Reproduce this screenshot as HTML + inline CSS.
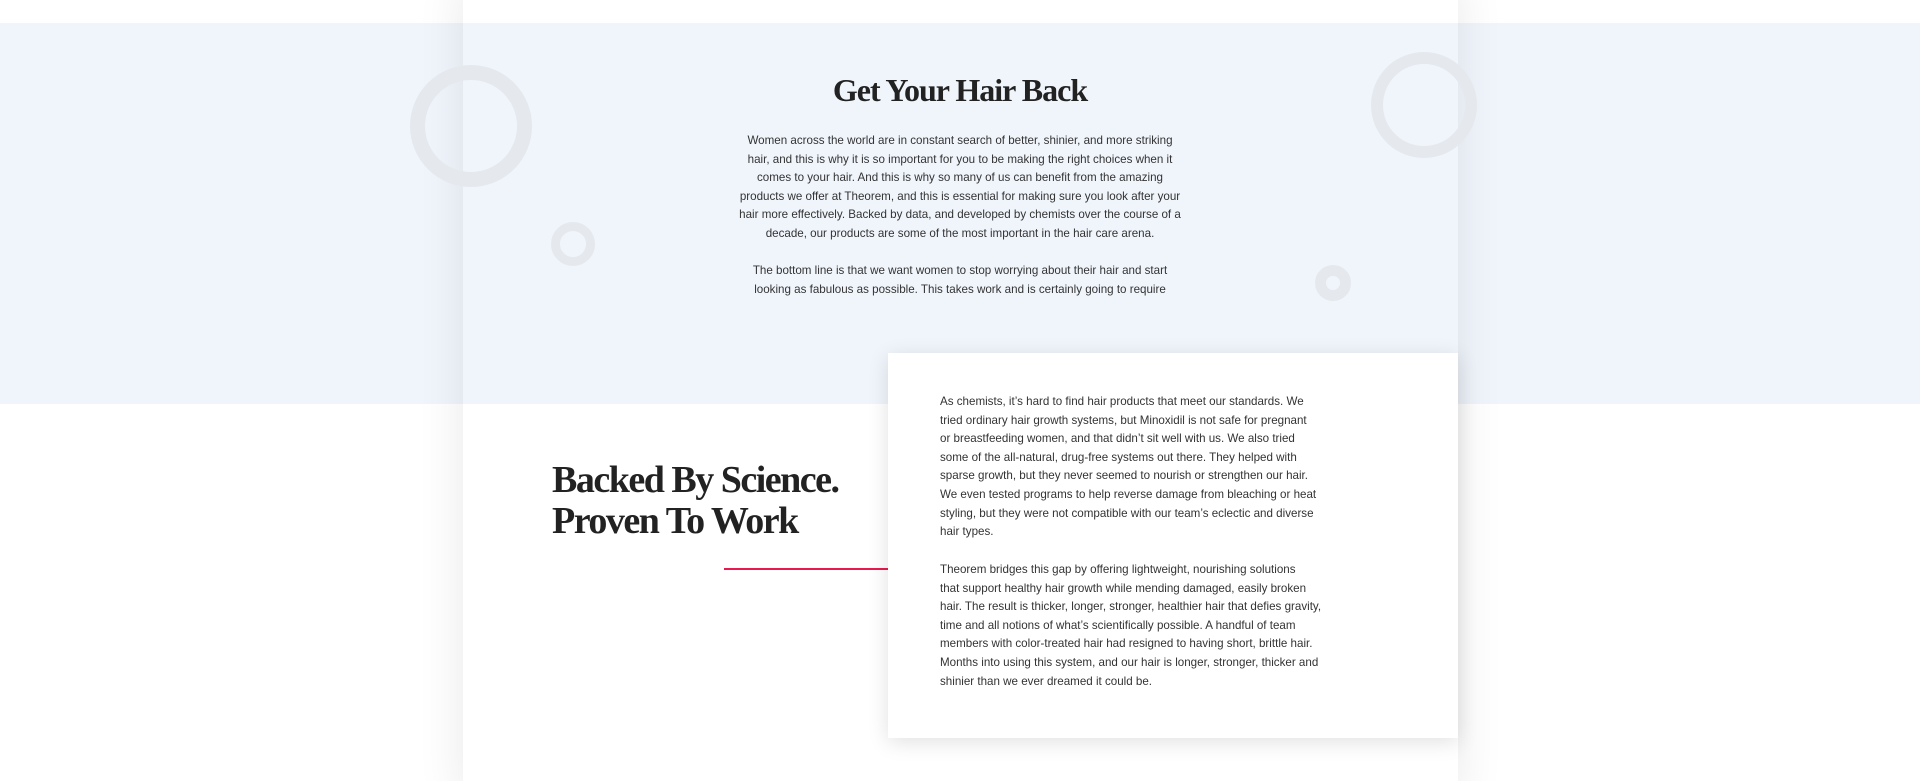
<!DOCTYPE html>
<html><head><meta charset="utf-8"><style>
html,body{margin:0;padding:0;width:1920px;height:781px;overflow:hidden;background:#fff;position:relative}
.band{position:absolute;left:0;top:23px;width:1920px;height:381px;background:#f0f5fc}
.col{position:absolute;left:463px;top:-20px;width:995px;height:820px;box-shadow:0 0 45px rgba(0,0,0,.09)}
.ring{position:absolute;border-radius:50%;border-style:solid;border-color:#e5e9ee;box-sizing:border-box}
h1,h2{font-family:"Liberation Serif",serif;font-weight:bold;color:#222;margin:0;letter-spacing:-1px}
h1{position:absolute;left:0;width:1920px;top:72px;text-align:center;font-size:32px}
p{font-family:"Liberation Sans",sans-serif;font-size:11.6px;line-height:18.6px;color:#333;margin:0;white-space:nowrap}
.intro{position:absolute;left:660px;width:600px;top:132px;text-align:center}
.card{position:absolute;left:888px;top:353px;width:570px;height:385px;background:#fff;box-shadow:0 4px 20px rgba(0,0,0,.12)}
.card p{position:absolute;left:52px}
h2{position:absolute;left:552px;top:460px;font-size:38px;line-height:41px;letter-spacing:-1.5px}
.red{position:absolute;left:724px;top:568px;width:164px;height:2px;background:#e8194f}
</style></head><body>
<div class="band"></div>
<div class="col"></div>
<div class="ring" style="left:410px;top:65px;width:122px;height:122px;border-width:15px"></div>
<div class="ring" style="left:1371px;top:52px;width:106px;height:106px;border-width:12px"></div>
<div class="ring" style="left:551px;top:222px;width:44px;height:44px;border-width:9px"></div>
<div class="ring" style="left:1315px;top:265px;width:36px;height:36px;border-width:11px"></div>
<h1>Get Your Hair Back</h1>
<div class="intro">
<p>Women across the world are in constant search of better, shinier, and more striking<br>hair, and this is why it is so important for you to be making the right choices when it<br>comes to your hair. And this is why so many of us can benefit from the amazing<br>products we offer at Theorem, and this is essential for making sure you look after your<br>hair more effectively. Backed by data, and developed by chemists over the course of a<br>decade, our products are some of the most important in the hair care arena.</p>
<p style="margin-top:18.6px">The bottom line is that we want women to stop worrying about their hair and start<br>looking as fabulous as possible. This takes work and is certainly going to require</p>
</div>
<h2>Backed By Science.<br>Proven To Work</h2>
<div class="red"></div>
<div class="card">
<p style="top:40px">As chemists, it’s hard to find hair products that meet our standards. We<br>tried ordinary hair growth systems, but Minoxidil is not safe for pregnant<br>or breastfeeding women, and that didn’t sit well with us. We also tried<br>some of the all-natural, drug-free systems out there. They helped with<br>sparse growth, but they never seemed to nourish or strengthen our hair.<br>We even tested programs to help reverse damage from bleaching or heat<br>styling, but they were not compatible with our team’s eclectic and diverse<br>hair types.</p>
<p style="top:208px">Theorem bridges this gap by offering lightweight, nourishing solutions<br>that support healthy hair growth while mending damaged, easily broken<br>hair. The result is thicker, longer, stronger, healthier hair that defies gravity,<br>time and all notions of what’s scientifically possible. A handful of team<br>members with color-treated hair had resigned to having short, brittle hair.<br>Months into using this system, and our hair is longer, stronger, thicker and<br>shinier than we ever dreamed it could be.</p>
</div>
</body></html>
